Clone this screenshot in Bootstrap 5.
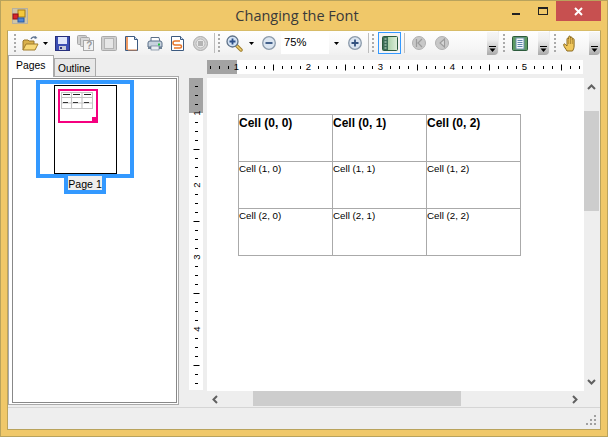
<!DOCTYPE html>
<html lang="en">
<head>
<meta charset="utf-8">
<title>Changing the Font</title>
<link href="https://cdn.jsdelivr.net/npm/bootstrap@5.3.0/dist/css/bootstrap.min.css" rel="stylesheet">
<style>
html,body{margin:0;background:#f0c869;overflow:hidden}
body{font-family:"Liberation Sans",Arial,sans-serif;font-size:10.5px;color:#000;line-height:1.2}
svg{display:block;flex:none}
.frame{width:608px;height:437px;background:#f0c869;border:1px solid #b9a35c}
.titlebar{height:29px;position:relative}
.wintitle{font-family:"Open Sans",sans-serif;font-size:14.5px;color:#3a3a3a;line-height:29px;margin-left:-14px;padding-top:0}
.appico{position:absolute;left:11px;top:7px}
.wbtns{position:absolute;right:6px;top:0;height:20px}
.wb{width:28px;height:20px}
.minglyph{margin:7px 0 0 4px}
.maxglyph{margin-left:2px}
.wbclose{width:45px;height:20px;background:#c75050}
.clientbox{width:594px;height:400px;margin-left:6px;background:#eee;border:1px solid #b9a35c;border-top:1px solid #d8bc68}
.tbar{height:24px}
.tstrip{height:24px;background:linear-gradient(#fefefe,#f6f6f6 70%,#f0f0f0);border-radius:0 0 3px 0}
.cellb{width:23px;height:24px}
.gripdots{width:2px;height:18px;background:repeating-linear-gradient(#aaa 0 2px,transparent 2px 4px)}
.vsep{width:1px;height:20px;background:#bdbdbd}
.zoomfield{width:48px;height:22px;background:#fff;font-size:11.2px;padding-left:3px;line-height:20px;margin-top:-1px}
.ovf{width:11px;height:23px;margin-top:1px;background:linear-gradient(#f6f6f6,#eee 35%,#a9a9a9);border-radius:0 0 4px 0;padding:14px 0 0 2px}
.activebox{width:23px;height:22px;border:1px solid #3399ff;background:#f4f4f4}
.midrow{height:352px}
.leftpane{width:171px;height:351px;position:relative}
.tabsrow{height:22px}
.tabon{width:46px;height:22px;background:#fff;border:1px solid #aaa;border-bottom:0;padding:3px 0 0 7px;position:relative;z-index:2;font-size:10.4px;line-height:13px}
.taboff{width:42px;height:19px;margin-top:3px;background:#e8e8e8;border:1px solid #aaa;padding:3px 0 0 3px;font-size:10.2px;line-height:13px}
.tabbody{height:329px;background:#fff;border:1px solid #aaa;padding:1px 1px 2px 3px;margin-top:-1px;position:relative;z-index:1}
.listbox{width:165px;height:325px;border:1px solid #888;padding-top:1px}
.thumbsel{width:98px;height:98px;border:4px solid #39f;margin-left:23px;padding:1px 0 0 14px;position:relative}
.thumbpg{width:63px;height:89px;border:1px solid #000;background:#fff;padding:3px 0 0 3px;position:relative}
.thumbpink{width:40px;height:34px;border:2px solid #f5007f;position:relative;padding:1px 0 0 1px}
.pinkcorner{position:absolute;right:-2px;bottom:-2px;width:6px;height:6px;background:#f5007f}
.pagelbl{width:42px;height:18px;border:4px solid #39f;border-top:0;margin:-2px 0 0 51px;background:#eee;text-align:center;position:relative;font-size:10.6px;line-height:16px;white-space:nowrap}
.rightpane{width:421px;padding-left:10px;display:grid;grid-template-columns:14px 4px 377px 16px;grid-template-rows:5px 14px 4px 313px 15px}
.hrul{grid-column:3/5;grid-row:2}
.vrul{grid-column:1;grid-row:4/6}
.canvasarea{grid-column:3;grid-row:4;background:#fff;padding:36px 0 0 31px}
.vscroll{grid-column:4;grid-row:4/5;position:relative}
.hscroll{grid-column:3/4;grid-row:5;position:relative}
.vthumb{width:15px;height:100px;background:#cdcdcd;margin-top:33px}
.hthumb{width:208px;height:15px;background:#cdcdcd;margin-left:46px}
.arrowv{position:absolute;left:3px}
.arrowh{position:absolute;top:4px}
.statusrow{height:22px;border-top:1px solid #d5d5d5;margin-top:0;position:relative}
.sizegrip{position:absolute;right:3px;bottom:3px}
.doc-grid{width:283px;table-layout:fixed;border-collapse:collapse;margin:0;font-size:9.75px}
.doc-grid td{border:1px solid #aaa;height:47px;padding:1px 0 0 0;vertical-align:top;background:#fff;color:#000;line-height:11px}
.doc-grid td.hd{font-size:12px;font-weight:700;line-height:14px}
.rtxt{font:9.5px "Liberation Sans",sans-serif;fill:#000}
</style>
</head>
<body>
<div class="frame">
  <div class="titlebar d-flex justify-content-center">
    <svg class="appico" width="16" height="16" viewBox="0 0 16 16"><rect x=".5" y=".5" width="15" height="15" fill="#cfc5a8" stroke="#b5b0a0"/><rect x="6" y="2" width="7" height="7" fill="#f6c93a" stroke="#a57d14"/><rect x="1" y="6" width="5" height="5" fill="#d8242a" stroke="#8c1218"/><rect x="6" y="10" width="6" height="4" fill="#4d86d6" stroke="#2a5aa0"/></svg>
    <div class="wintitle">Changing the Font</div>
    <div class="wbtns d-flex">
      <div class="wb d-flex align-items-center justify-content-center"><svg class="minglyph" width="9" height="3"><rect y="0" width="8" height="2" fill="#222"/></svg></div>
      <div class="wb d-flex align-items-center justify-content-center"><svg class="maxglyph" width="10" height="8"><rect x=".5" y=".5" width="9" height="7" fill="none" stroke="#222"/><rect width="10" height="2" fill="#222"/></svg></div>
      <div class="wbclose d-flex align-items-center justify-content-center"><svg width="9" height="9"><path d="M1 1l7 7M8 1L1 8" stroke="#fff" stroke-width="2"/></svg></div>
    </div>
  </div>
  <div class="clientbox d-flex flex-column">
    <div class="tbar d-flex">
      <div class="tstrip d-flex align-items-center" style="width:491px">
        <div class="d-flex justify-content-center" style="width:13px"><div class="gripdots"></div></div>
        <div class="cellb d-flex align-items-center justify-content-center" style="width:19px">
          <svg width="17" height="15" viewBox="0 0 17 15"><path d="M9 3c1-2 3-2.500 5-1.500" fill="none" stroke="#5c7290" stroke-width="1.500"/><path d="M13 0l2.500 2-3 1z" fill="#5c7290"/><path d="M1 14V5l1-1h4l1 1h5v3" fill="#d9b04a" stroke="#96742a"/><path d="M1 14l3-6h12l-3 6z" fill="#f8d978" stroke="#a17c2a"/></svg>
        </div>
        <div class="d-flex justify-content-center" style="width:11px"><svg width="5" height="3"><path d="M0 0h5L2.500 3z" fill="#000"/></svg></div>
        <div class="cellb d-flex align-items-center justify-content-center"><svg width="15" height="15" viewBox="0 0 15 15"><rect x=".5" y=".5" width="14" height="14" fill="#3c4fb4" stroke="#27307c"/><rect x="3" y="1" width="9" height="7" fill="#dfe6fb"/><rect x="4" y="10" width="7" height="4" fill="#c8cbd8"/><rect x="5" y="11" width="2" height="2" fill="#27307c"/></svg></div>
        <div class="cellb d-flex align-items-center justify-content-center"><svg width="17" height="16" viewBox="0 0 17 16"><rect x=".5" y=".5" width="9" height="9" rx="1" fill="#cfcfcf" stroke="#a8a8a8"/><rect x="3.500" y="2.500" width="9" height="9" rx="1" fill="#d8d8d8" stroke="#a8a8a8"/><rect x="6.500" y="5.500" width="10" height="10" fill="#f2f2f2" stroke="#a8a8a8"/><text x="9.300" y="14" font-family="Liberation Sans" font-weight="700" font-size="10" fill="#9a9a9a">?</text></svg></div>
        <div class="cellb d-flex align-items-center justify-content-center"><svg width="16" height="15" viewBox="0 0 16 15"><rect x=".5" y=".5" width="15" height="14" rx="1" fill="#cfcfcf" stroke="#aaa"/><rect x="3.500" y="2.500" width="9" height="10" fill="#e6e6e6" stroke="#b4b4b4"/></svg></div>
        <div class="cellb d-flex align-items-center justify-content-center"><svg width="13" height="15" viewBox="0 0 13 15"><path d="M.5.500h9l3 3v11H.5z" fill="#fff" stroke="#3c5a80"/><rect x="1" y="1" width="2" height="13" fill="#ef9a62"/><path d="M9.500.500v3h3" fill="#cfe0f4" stroke="#3c5a80"/><path d="M3 14h9" stroke="#e08a50"/></svg></div>
        <div class="cellb d-flex align-items-center justify-content-center"><svg width="16" height="15" viewBox="0 0 16 15"><path d="M4 6V1.500h8L13 6" fill="#fff" stroke="#5b6f88"/><path d="M1 7q0-2 2-2h10q2 0 2 2v4H1z" fill="#c7d2de" stroke="#5b6f88"/><path d="M1 11h14v2H1z" fill="#6f8296"/><rect x="4" y="10" width="8" height="4" fill="#e9edf2" stroke="#5b6f88" stroke-width=".6"/><rect x="11" y="7.500" width="2" height="2" fill="#20c040"/></svg></div>
        <div class="cellb d-flex align-items-center justify-content-center"><svg width="13" height="15" viewBox="0 0 13 15"><path d="M.5.500h9l3 3v11H.5z" fill="#fff" stroke="#3c5a80"/><path d="M9.500.500v3h3" fill="#cfe0f4" stroke="#3c5a80"/><path d="M9 5H4a1.500 1.500 0 0 0 0 4h5a1.500 1.500 0 0 1 0 3H3" fill="none" stroke="#e8762a" stroke-width="1.500"/></svg></div>
        <div class="cellb d-flex align-items-center justify-content-center"><svg width="15" height="15" viewBox="0 0 15 15"><circle cx="7.500" cy="7.500" r="7" fill="#d4d4d4" stroke="#aaa"/><circle cx="7.500" cy="7.500" r="4.500" fill="#e8e8e8" stroke="#b8b8b8"/><rect x="5" y="5" width="5" height="5" fill="#b4b4b4"/></svg></div>
        <div class="d-flex justify-content-center" style="width:4px"><div class="vsep"></div></div>
        <div class="d-flex justify-content-center" style="width:6px"><div class="gripdots"></div></div>
        <div class="cellb d-flex align-items-center justify-content-center" style="width:23px;margin-left:1px"><svg width="17" height="17" viewBox="0 0 17 17"><path d="M10 10l5 5" stroke="#a07e2a" stroke-width="3.500" stroke-linecap="round"/><path d="M10 10l5 5" stroke="#f0cf70" stroke-width="1.500" stroke-linecap="round"/><circle cx="6.500" cy="6.500" r="5.500" fill="#d3e2f4" stroke="#5e7288" stroke-width="1.300"/><path d="M3.500 6.500h6M6.500 3.500v6" stroke="#2c4f88" stroke-width="1.800"/></svg></div>
        <div class="d-flex justify-content-center" style="width:10px"><svg width="5" height="3"><path d="M0 0h5L2.500 3z" fill="#000"/></svg></div>
        <div class="cellb d-flex align-items-center justify-content-center" style="margin-left:1px"><svg width="14" height="14" viewBox="0 0 14 14"><circle cx="7" cy="7" r="6.300" fill="#dbe5f0" stroke="#8b9aaa" stroke-width="1.300"/><path d="M3.500 7h7" stroke="#33527f" stroke-width="1.800"/></svg></div>
        <div class="zoomfield" style="margin-left:1px">75%</div>
        <div class="d-flex justify-content-center" style="width:10px;margin-left:2px"><svg width="5" height="3"><path d="M0 0h5L2.500 3z" fill="#000"/></svg></div>
        <div class="cellb d-flex align-items-center justify-content-center" style="margin-left:2px"><svg width="14" height="14" viewBox="0 0 14 14"><circle cx="7" cy="7" r="6.300" fill="#dbe5f0" stroke="#8b9aaa" stroke-width="1.300"/><path d="M3.500 7h7M7 3.500v7" stroke="#33527f" stroke-width="1.800"/></svg></div>
        <div class="d-flex justify-content-center" style="width:4px"><div class="vsep"></div></div>
        <div class="d-flex justify-content-center" style="width:6px"><div class="gripdots"></div></div>
        <div class="activebox d-flex align-items-center justify-content-center" style="margin-left:2px"><svg width="16" height="15" viewBox="0 0 16 15"><defs><linearGradient id="gg" x1="0" x2="1"><stop offset="0" stop-color="#8fc08e"/><stop offset="1" stop-color="#dff0dc"/></linearGradient></defs><rect x=".5" y=".5" width="15" height="14" rx="1" fill="url(#gg)" stroke="#2c5a3c"/><rect x="1" y="1" width="5" height="13" fill="#3c6e58"/><path d="M2.500 3h2M2.500 6h2M2.500 9h2M2.500 12h2" stroke="#cfe2d4" stroke-width="1.200"/></svg></div>
        <div class="d-flex justify-content-center" style="width:6px;margin-left:0"><div class="vsep"></div></div>
        <div class="cellb d-flex align-items-center justify-content-center"><svg width="14" height="14" viewBox="0 0 14 14"><circle cx="7" cy="7" r="6.500" fill="#c8c8c8" stroke="#b0b0b0"/><path d="M4.500 3v8M10 3L6 7l4 4" fill="none" stroke="#9c9c9c" stroke-width="1.200"/></svg></div>
        <div class="cellb d-flex align-items-center justify-content-center"><svg width="14" height="14" viewBox="0 0 14 14"><circle cx="7" cy="7" r="6.500" fill="#c8c8c8" stroke="#b0b0b0"/><path d="M9.500 3L5 7l4.500 4z" fill="#d8d8d8" stroke="#9c9c9c" stroke-width="1.100"/></svg></div>
        <div class="ovf ms-auto"><svg width="7" height="6" viewBox="0 0 7 6"><path d="M0 .500h7" stroke="#000"/><path d="M.5 2.500h6L3.500 6z" fill="#000"/></svg></div>
      </div>
      <div class="tstrip d-flex align-items-center" style="width:50px;margin-left:1px">
        <div class="d-flex justify-content-center" style="width:7px;margin-left:1px"><div class="gripdots"></div></div>
        <div class="cellb d-flex align-items-center justify-content-center" style="margin-left:1px"><svg width="16" height="15" viewBox="0 0 16 15"><rect x=".5" y=".5" width="15" height="14" rx="1" fill="#5c9a62" stroke="#2c5a3c"/><rect x="4" y="2" width="8" height="11" fill="#f4f8fb" stroke="#6d8fa8"/><path d="M5.500 4.500h5M5.500 6.500h5M5.500 8.500h5M5.500 10.500h5" stroke="#5f86ad"/></svg></div>
        <div class="ovf ms-auto"><svg width="7" height="6" viewBox="0 0 7 6"><path d="M0 .500h7" stroke="#000"/><path d="M.5 2.500h6L3.500 6z" fill="#000"/></svg></div>
      </div>
      <div class="tstrip d-flex align-items-center" style="width:50px;margin-left:1px">
        <div class="d-flex justify-content-center" style="width:7px;margin-left:1px"><div class="gripdots"></div></div>
        <div class="cellb d-flex align-items-center justify-content-center" style="margin-left:1px"><svg width="16" height="17" viewBox="0 0 16 17"><path d="M4 16c-1-2-3-4-3.300-6-.2-1.300 1-1.500 1.800-.5L4 11V4c0-1.200 1.700-1.200 1.700 0V2c0-1.300 1.800-1.300 1.800 0v1c0-1.200 1.800-1.200 1.800 0v1.500c0-1.200 1.800-1.200 1.800 0V11c0 2.500-.8 3.500-1.600 5z" fill="#f0c75c" stroke="#8c6a1e"/><path d="M5.700 4v5M7.500 3v6M9.300 4v5" stroke="#a68030" stroke-width=".8"/></svg></div>
        <div class="ovf ms-auto"><svg width="7" height="6" viewBox="0 0 7 6"><path d="M0 .500h7" stroke="#000"/><path d="M.5 2.500h6L3.500 6z" fill="#000"/></svg></div>
      </div>
    </div>
    <div class="midrow d-flex">
      <div class="leftpane">
        <div class="tabsrow d-flex">
          <div class="tabon">Pages</div>
          <div class="taboff">Outline</div>
        </div>
        <div class="tabbody">
          <div class="listbox">
            <div class="thumbsel">
              <div class="thumbpg">
                <div class="thumbpink">
                  <svg width="32" height="17" viewBox="0 0 32 17"><path d="M.5.500h31v16H.5zM.5 5.500h31M.5 11h31M10.500.500v16M21 .500v16" fill="none" stroke="#c4c4c4" stroke-width="1.100"/><path d="M2 2.500h7M12 2.500h7M23 2.500h7" stroke="#222"/><path d="M2 10.500h5M12 10.500h5M23 10.500h5" stroke="#333"/></svg>
                  <div class="pinkcorner"></div>
                </div>
              </div>
            </div>
            <div class="pagelbl">Page 1</div>
          </div>
        </div>
      </div>
      <div class="rightpane">
        <svg class="hrul" width="376" height="14" viewBox="0 0 376 14"><rect width="376" height="14" fill="#fff"/><rect width="30" height="14" fill="#a3a3a3"/><path d="M-33 7.500H376" stroke="#000" stroke-width="3" stroke-dasharray="1 8 1 8 1 8 1 8 1 8 1 8 1 17"/><path d="M-6 7.500H376" stroke="#000" stroke-width="6" stroke-dasharray="1 71"/><text class="rtxt" text-anchor="middle" x="29.500" y="10">1</text><text class="rtxt" text-anchor="middle" x="101.500" y="10">2</text><text class="rtxt" text-anchor="middle" x="173.500" y="10">3</text><text class="rtxt" text-anchor="middle" x="245.500" y="10">4</text><text class="rtxt" text-anchor="middle" x="317.500" y="10">5</text></svg>
        <svg class="vrul" width="14" height="312" viewBox="0 0 14 312"><rect width="14" height="312" fill="#fff"/><rect width="14" height="35" fill="#a3a3a3"/><path d="M7.500 -28V312" stroke="#000" stroke-width="3" stroke-dasharray="1 8 1 8 1 8 1 8 1 8 1 8 1 17"/><path d="M7.500 -1V312" stroke="#000" stroke-width="6" stroke-dasharray="1 71"/><text class="rtxt" text-anchor="middle" transform="translate(10.500 35) rotate(-90)">1</text><text class="rtxt" text-anchor="middle" transform="translate(10.500 107) rotate(-90)">2</text><text class="rtxt" text-anchor="middle" transform="translate(10.500 179) rotate(-90)">3</text><text class="rtxt" text-anchor="middle" transform="translate(10.500 251) rotate(-90)">4</text></svg>
        <div class="canvasarea">
          <table class="doc-grid">
            <tr><td class="hd">Cell (0, 0)</td><td class="hd">Cell (0, 1)</td><td class="hd">Cell (0, 2)</td></tr>
            <tr><td>Cell (1, 0)</td><td>Cell (1, 1)</td><td>Cell (1, 2)</td></tr>
            <tr><td>Cell (2, 0)</td><td>Cell (2, 1)</td><td>Cell (2, 2)</td></tr>
          </table>
        </div>
        <div class="vscroll">
          <svg class="arrowv" style="top:6px" width="9" height="6" viewBox="0 0 9 6"><path d="M1 5l3.500-3.500L8 5" fill="none" stroke="#606060" stroke-width="2"/></svg>
          <div class="vthumb"></div>
          <svg class="arrowv" style="bottom:6px" width="9" height="6" viewBox="0 0 9 6"><path d="M1 1l3.500 3.500L8 1" fill="none" stroke="#606060" stroke-width="2"/></svg>
        </div>
        <div class="hscroll">
          <svg class="arrowh" style="left:5px" width="6" height="9" viewBox="0 0 6 9"><path d="M5 1L1.500 4.500 5 8" fill="none" stroke="#606060" stroke-width="2"/></svg>
          <div class="hthumb"></div>
          <svg class="arrowh" style="right:6px" width="6" height="9" viewBox="0 0 6 9"><path d="M1 1l3.500 3.500L1 8" fill="none" stroke="#606060" stroke-width="2"/></svg>
        </div>
      </div>
    </div>
    <div class="statusrow">
      <svg class="sizegrip" width="11" height="11" viewBox="0 0 11 11"><path d="M8 0h2v2H8zM4 4h2v2H4zM8 4h2v2H8zM0 8h2v2H0zM4 8h2v2H4zM8 8h2v2H8z" fill="#a0a0a0"/></svg>
    </div>
  </div>
</div>
</body>
</html>
